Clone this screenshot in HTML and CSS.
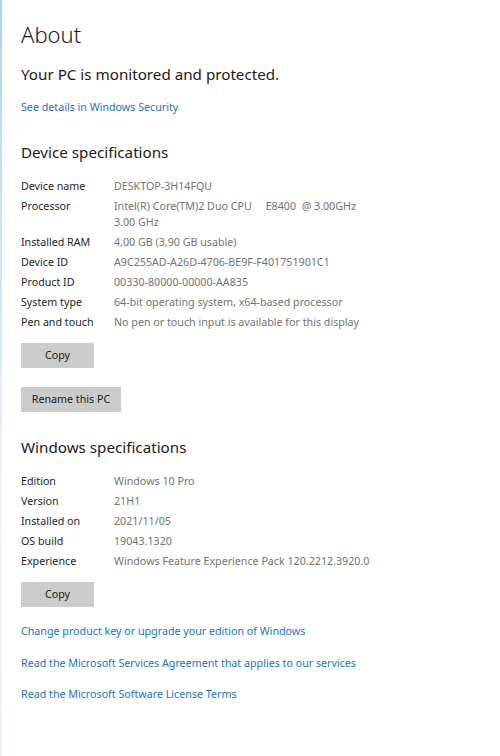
FILE: index.html
```html
<!DOCTYPE html>
<html>
<head>
<meta charset="utf-8">
<link rel="stylesheet" href="styles.css">
</head>
<body>
<div class="page">
  <h1 class="title">About</h1>
  <p class="status">Your PC is monitored and protected.</p>
  <a class="link first-link" href="#">See details in Windows Security</a>

  <h2 class="section">Device specifications</h2>
  <div class="specs">
    <div class="label">Device name</div><div class="value">DESKTOP-3H14FQU</div>
    <div class="label">Processor</div><div class="value">Intel(R) Core(TM)2 Duo CPU&nbsp;&nbsp;&nbsp;&nbsp; E8400&nbsp; @ 3.00GHz<br>3.00 GHz</div>
    <div class="label">Installed RAM</div><div class="value">4,00 GB (3,90 GB usable)</div>
    <div class="label">Device ID</div><div class="value">A9C255AD-A26D-4706-BE9F-F401751901C1</div>
    <div class="label">Product ID</div><div class="value">00330-80000-00000-AA835</div>
    <div class="label">System type</div><div class="value">64-bit operating system, x64-based processor</div>
    <div class="label">Pen and touch</div><div class="value">No pen or touch input is available for this display</div>
  </div>
  <button class="btn copy">Copy</button>
  <button class="btn rename">Rename this PC</button>

  <h2 class="section second">Windows specifications</h2>
  <div class="specs">
    <div class="label">Edition</div><div class="value">Windows 10 Pro</div>
    <div class="label">Version</div><div class="value">21H1</div>
    <div class="label">Installed on</div><div class="value">2021/11/05</div>
    <div class="label">OS build</div><div class="value">19043.1320</div>
    <div class="label">Experience</div><div class="value">Windows Feature Experience Pack 120.2212.3920.0</div>
  </div>
  <button class="btn copy">Copy</button>

  <div class="links">
    <a class="link" href="#">Change product key or upgrade your edition of Windows</a>
    <a class="link" href="#">Read the Microsoft Services Agreement that applies to our services</a>
    <a class="link" href="#">Read the Microsoft Software License Terms</a>
  </div>
</div>
</body>
</html>
```

FILE: styles.css
```css
html, body {
  margin: 0;
  padding: 0;
  background: #ffffff;
}
body {
  width: 500px;
  height: 756px;
  overflow: hidden;
  font-family: "Noto Sans", "Open Sans", sans-serif;
  color: #1b1b1b;
  border-left: 2px solid;
  border-image: linear-gradient(to bottom, #a9d4f2 0%, #d4e8f5 40%, #f4f6f8 70%, #e6f2fb 100%) 1;
  box-sizing: border-box;
}
.page {
  padding: 18px 0 0 19px;
  display: flex;
  flex-direction: column;
  align-items: flex-start;
}
.title {
  margin: 0;
  font-size: 22px;
  font-weight: 300;
  line-height: 32px;
  color: #1a1a1a;
}
.status {
  margin: 14px 0 0;
  font-size: 15.2px;
  line-height: 20px;
  font-weight: 400;
  color: #1a1a1a;
}
.link {
  font-size: 10.7px;
  line-height: 16px;
  color: #1a73c8;
  text-decoration: none;
}
.first-link {
  margin-top: 15px;
}
.section {
  margin: 26px 0 0;
  font-size: 15.2px;
  font-weight: 400;
  line-height: 22px;
  color: #1a1a1a;
}
.section.second {
  margin-top: 24px;
}
.specs {
  margin-top: 15px;
  display: grid;
  grid-template-columns: 93px auto;
  row-gap: 4px;
  font-size: 10.7px;
  line-height: 16px;
}
.label {
  color: #1e1e1e;
}
.value {
  color: #737373;
}
.btn {
  font-family: inherit;
  font-size: 10.7px;
  line-height: 15px;
  color: #1a1a1a;
  background: #cccccc;
  border: none;
  height: 25px;
  padding: 0;
  margin: 0;
  white-space: nowrap;
}
.copy {
  width: 73px;
  margin-top: 13px;
}
.rename {
  width: 100px;
  margin-top: 19px;
}
.links {
  margin-top: 16px;
  display: flex;
  flex-direction: column;
  gap: 15.5px;
}
```
